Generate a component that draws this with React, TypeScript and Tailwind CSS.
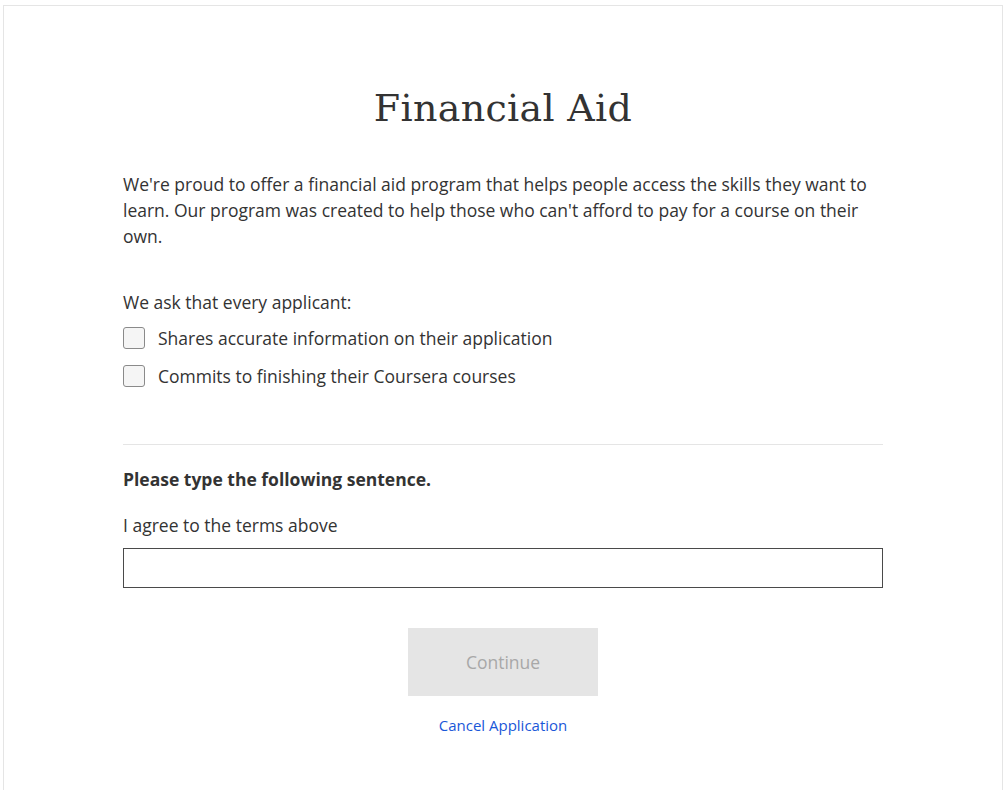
import React from 'react'

const App = () => {
  const terms = [
    'Shares accurate information on their application',
    'Commits to finishing their Coursera courses',
  ]

  return (
    <div className="min-h-screen bg-white pl-[3px] pr-[4px] pt-[5px]" style={{ fontFamily: '"Open Sans", sans-serif' }}>
      <div className="min-h-[800px] border border-[#e5e5e5] bg-white px-[119px] pt-[76px] text-[#333]">
        {/* Title */}
        <h1
          className="text-center text-[38px] leading-[52px] font-light tracking-[0.3px] text-[#333]"
          style={{ fontFamily: '"DejaVu Serif", serif' }}
        >
          Financial Aid
        </h1>

        {/* Intro */}
        <p className="mt-[37px] text-[17.5px] leading-[26px]">
          We're proud to offer a financial aid program that helps people access the skills they want to learn. Our
          program was created to help those who can't afford to pay for a course on their own.
        </p>

        <p className="mt-[40px] text-[17.5px] leading-[26px]">We ask that every applicant:</p>
        <div className="mt-[12px] flex flex-col gap-4">
          {terms.map((t) => (
            <label key={t} className="flex items-center gap-[13px] text-[17.5px] leading-[22px]">
              <span className="h-[22px] w-[22px] rounded-[3px] border border-[#8a8a8a] bg-[#f5f5f5]" />
              {t}
            </label>
          ))}
        </div>

        <hr className="mt-[57px] border-t border-[#e5e5e5]" />

        {/* Agreement */}
        <p className="mt-[21px] text-[17.5px] leading-[26px] font-bold">Please type the following sentence.</p>
        <p className="mt-[20px] text-[17.5px] leading-[26px]">I agree to the terms above</p>
        <input type="text" className="mt-[10px] block h-[40px] w-full border border-[#4a4a4a] px-3 outline-none" />

        <div className="mt-[40px] flex flex-col items-center">
          <button disabled className="h-[68px] w-[190px] bg-[#e5e5e5] text-[17.5px] text-[#a8a8a8]">
            Continue
          </button>
          <a href="#" className="mt-[19px] text-[15px] leading-[20px] text-[#1a57d8]">
            Cancel Application
          </a>
        </div>
      </div>
    </div>
  )
}

export default App
